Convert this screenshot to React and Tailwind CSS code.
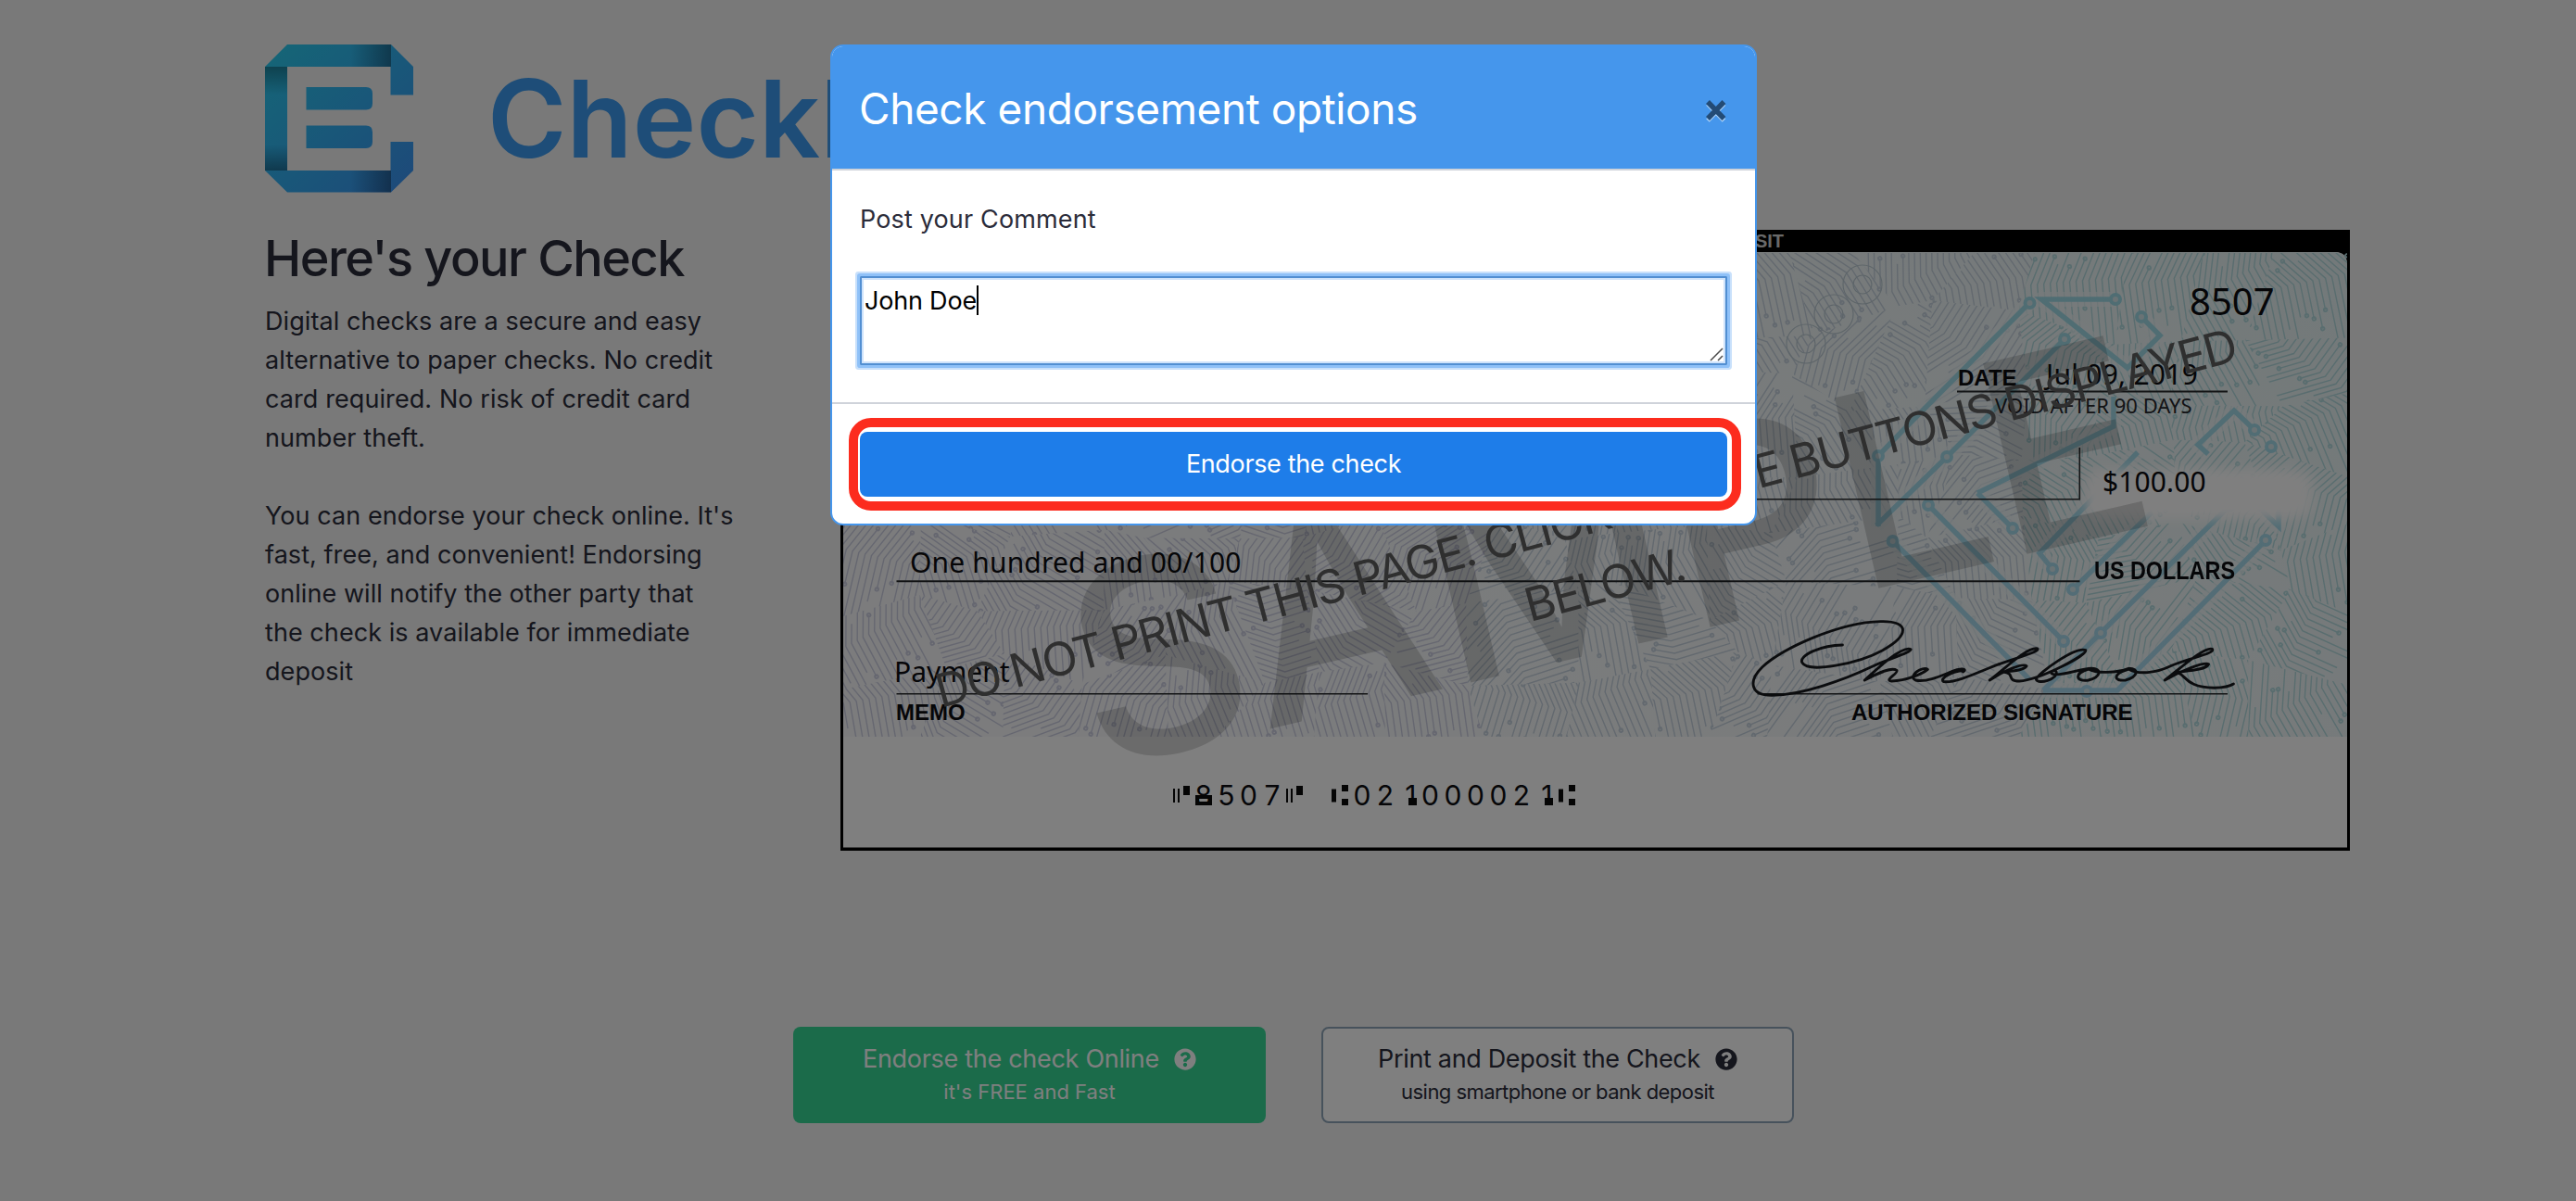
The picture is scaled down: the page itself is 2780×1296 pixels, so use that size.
import React from "react";
import { FaQuestionCircle } from "react-icons/fa";

function makeRandom(seed) {
  let s = seed;
  return () => {
    s = (s * 1664525 + 1013904223) % 4294967296;
    return s / 4294967296;
  };
}

/* Security background of the check: patches of parallel, bent circuit traces. */
function buildPatches() {
  const rnd = makeRandom(20);
  const cols = 19;
  const rows = 7;
  const cw = 1623 / cols;
  const ch = 522 / rows;
  const grid = [];
  for (let r = 0; r <= rows; r++) {
    grid.push([]);
    for (let c = 0; c <= cols; c++) {
      grid[r].push([
        c * cw + (c > 0 && c < cols ? (rnd() - 0.5) * 58 : 0),
        r * ch + (r > 0 && r < rows ? (rnd() - 0.5) * 50 : 0),
      ]);
    }
  }
  const angles = [64, 72, -62, 58, 24, -24, 80, -56, 60, 100];
  const patches = [];
  for (let r = 0; r < rows; r++) {
    for (let c = 0; c < cols; c++) {
      const quad = [grid[r][c], grid[r][c + 1], grid[r + 1][c + 1], grid[r + 1][c]];
      const cx = (c + 0.5) * cw;
      const cy = (r + 0.5) * ch;
      const angle = angles[Math.floor(rnd() * angles.length)] + rnd() * 8;
      const bend = (rnd() > 0.5 ? 1 : -1) * (18 + rnd() * 16);
      let d = "";
      const dots = [];
      for (let y = -98; y <= 98; y += 7) {
        const a = rnd() > 0.5 ? -20 - rnd() * 30 : -110;
        const b = rnd() > 0.5 ? 18 + rnd() * 30 : 110;
        const ya = y + (bend * (a + 6)) / 40;
        d += `M${a.toFixed(1)} ${ya.toFixed(1)}L-6 ${y}L${b.toFixed(1)} ${y}`;
        if (a > -110 && rnd() > 0.4) dots.push([a, ya]);
        if (b < 110 && rnd() > 0.4) dots.push([b, y]);
      }
      patches.push({ id: `p${r}x${c}`, quad: quad.map((p) => p.join(",")).join(" "), cx, cy, angle, d, dots });
    }
  }
  return patches;
}

const patches = buildPatches();

const traceColor = (x) => (x > 1250 ? "#b2dade" : x > 700 ? "#c6d2de" : "#cccee1");

const nodes = [
  [1283.5, 79], [1376, 75], [1404, 94], [1120, 244], [1321, 118], [1194, 245], [1174, 297],
  [1265, 322], [1320, 444], [1135.6, 336], [1308, 366], [1330, 388], [1360, 435], [1500, 297],
  [1345, 498], [1538, 335], [1526, 216], [1544, 234],
];

const emblem =
  "M1283 79L1146 217L1120 244V320M1376 75H1296L1389 149L1424 114L1404 94M1321 118L1194 245L1118 319M1174 297L1320 444M1136 336L1283 485M1298 497H1378L1538 335M1298 497L1360 435L1500 297M1330 388L1415 305M1227 284L1374 212V180M1227 284L1265 322M1308 366L1294 349L1400 240M1528 297L1552 320V295M1526 216L1504 195L1465 232L1476 242";

function CheckArtwork() {
  return (
    <svg className="absolute inset-0" width="1629" height="672" viewBox="0 0 1629 672" fill="none">
      <defs>
        <linearGradient id="paper" x1="0" x2="1" y1="0.3" y2="0">
          <stop offset="0" stopColor="#f8f9fb" />
          <stop offset="0.5" stopColor="#f3f7f8" />
          <stop offset="1" stopColor="#e6f3f4" />
        </linearGradient>
        <linearGradient id="emblem" gradientUnits="userSpaceOnUse" x1="1300" y1="60" x2="1300" y2="500">
          <stop offset="0" stopColor="#9fdbe6" />
          <stop offset="1" stopColor="#a9d9ee" />
        </linearGradient>
        <filter id="soft" x="-20%" y="-40%" width="140%" height="180%">
          <feGaussianBlur stdDeviation="7" />
        </filter>
        {patches.map((p) => (
          <clipPath id={p.id} key={p.id}>
            <polygon points={p.quad} />
          </clipPath>
        ))}
      </defs>
      <rect x="0" y="0" width="1629" height="670" fill="#000" />
      <path d="M3 24H1613Q1626 24 1626 38V666.500H3Z" fill="#ffffff" />
      <path d="M3 24H1613Q1626 24 1626 38V547H3Z" fill="url(#paper)" />
      <g transform="translate(3 25)" strokeWidth="1.400">
        {patches.map((p) => (
          <g key={p.id} clipPath={`url(#${p.id})`} stroke={traceColor(p.cx)}>
            <g transform={`translate(${p.cx} ${p.cy}) rotate(${p.angle})`}>
              <path d={p.d} />
              {p.dots.map((q, i) => (
                <circle key={i} cx={q[0]} cy={q[1]} r="1.800" strokeWidth="1.800" />
              ))}
            </g>
          </g>
        ))}
      </g>
      <g stroke="#bccbd3" strokeWidth="1.200">
        <circle cx="1103" cy="59" r="21" /><circle cx="1103" cy="59" r="10" />
        <circle cx="1072" cy="91" r="21" /><circle cx="1072" cy="91" r="10" />
        <circle cx="1042" cy="123" r="21" /><circle cx="1042" cy="123" r="10" />
      </g>

      <path d={emblem} stroke="#edf5f6" strokeWidth="16" strokeLinejoin="round" opacity="0.7" />
      <g stroke="url(#emblem)" strokeWidth="5.500">
        <path d={emblem} />
        {nodes.map((n, i) => (
          <circle key={i} cx={n[0]} cy={n[1]} r="5" strokeWidth="4" fill="#d5e6ea" />
        ))}
      </g>
      <rect x="1345" y="260" width="244" height="50" rx="12" fill="#ffffff" filter="url(#soft)" />
      <rect x="1350" y="264" width="220" height="42" rx="12" fill="#ffffff" filter="url(#soft)" />

      <g stroke="#26292b">
        <path d="M1205 174.500H1497" strokeWidth="2" />
        <path d="M60 290.700H1337.300V235" strokeWidth="1.600" />
        <path d="M60.500 379.300H1337.500" strokeWidth="2" />
        <path d="M60.500 500.700H569" strokeWidth="1.500" />
        <path d="M989.500 500.700H1497" strokeWidth="1.500" />
      </g>

      {/* Handwritten signature */}
      <g transform="translate(973 312) scale(0.4337 0.3333)" stroke="#17191d" strokeLinecap="round" strokeLinejoin="round" strokeWidth="2.900">
        <path vectorEffect="non-scaling-stroke" d="M250 408C200 408 138 442 150 466C165 500 290 468 350 425C415 378 420 330 345 332C240 335 100 420 50 480C15 525 20 572 75 571C150 570 255 520 320 480C370 450 420 432 420 422C400 408 340 480 305 522C340 498 372 478 385 490C390 500 352 522 372 525C410 524 450 500 462 487C450 476 410 508 432 522C460 530 500 505 522 494C545 480 562 486 550 495C545 482 485 515 502 527C535 532 600 488 640 470" />
        <path vectorEffect="non-scaling-stroke" d="M640 470C685 448 742 430 735 420C710 412 650 490 616 522C650 492 700 465 708 476C700 492 665 494 650 495C682 500 655 524 690 525C740 522 860 440 855 425C830 412 735 500 732 520C738 536 784 520 782 495C780 484 760 498 775 503C800 508 840 485 870 484C895 484 895 510 862 522C830 528 825 500 862 486C880 500 930 500 962 484C990 484 985 510 955 522C920 526 925 500 962 486C985 505 1030 500 1070 474C1120 448 1178 435 1170 421C1150 412 1085 490 1052 522C1090 492 1150 462 1161 470C1155 490 1105 492 1080 497C1105 500 1100 546 1175 547C1200 546 1215 541 1223 534" />
      </g>
    </svg>
  );
}

/* Two thin strokes and a block: the "on-us" mark of the MICR line. */
function OnUsMark() {
  return (
    <svg width="18" height="22" viewBox="0 0 18 22" fill="#0a0a0a">
      <rect x="0" y="4" width="2" height="15" />
      <rect x="5" y="4" width="2" height="15" />
      <rect x="11" y="1" width="7" height="10" />
    </svg>
  );
}

function TransitMark() {
  return (
    <svg width="18" height="22" viewBox="0 0 18 22" fill="#0a0a0a">
      <rect x="0" y="4.500" width="5" height="14" />
      <rect x="11" y="0" width="7" height="7" />
      <rect x="11" y="15" width="7" height="7" />
    </svg>
  );
}

function MicrCell({ ch }) {
  return (
    <span className="relative flex h-[22px] w-[24.5px] items-center justify-end">
      {ch === "u" && <OnUsMark />}
      {ch === "t" && <TransitMark />}
      {/[0-9]/.test(ch) && (
        <span className="font-['Inter'] text-[30px] leading-[22px]">{ch}</span>
      )}
      {ch === "8" && <span className="absolute bottom-0 right-0 h-[11px] w-[18px] border-[4px] border-[#0a0a0a]" />}
      {ch === "1" && <span className="absolute bottom-0 right-0 h-[8px] w-[9px] bg-[#0a0a0a]" />}
    </span>
  );
}

function Check() {
  return (
    <div className="relative mt-px h-[670px] w-[1629px] whitespace-nowrap text-[#0c0c10]">
      <CheckArtwork />
      <span className="absolute right-[611px] top-[2px] font-['Liberation_Sans'] text-[20px] font-bold leading-none text-[#d2d2d2]">MOBILE DEPOSIT</span>
      <span className="absolute left-[1456px] top-[57px] font-['Noto_Sans'] text-[40px] leading-none">8507</span>
      <span className="absolute left-[1206px] top-[148px] font-['Liberation_Sans'] text-[24px] font-bold leading-none">DATE</span>
      <span className="absolute left-[1301px] top-[141px] font-['Noto_Sans'] text-[30px] leading-none tracking-[0.25px]">Jul 09, 2019</span>
      <span className="absolute left-[1246px] top-[178px] font-['Noto_Sans'] text-[22px] leading-none text-[#26262a]">VOID AFTER 90 DAYS</span>
      <span className="absolute left-[1362px] top-[257px] font-['Noto_Sans'] text-[30px] leading-none tracking-[0.1px]">$100.00</span>
      <span className="absolute left-[75px] top-[344px] font-['Noto_Sans'] text-[30px] leading-none tracking-[0.15px]">One hundred and 00/100</span>
      <span className="absolute left-[58px] top-[462px] font-['Noto_Sans'] text-[30px] leading-none">Payment</span>
      <span className="absolute left-[60px] top-[509px] font-['Liberation_Sans'] text-[24px] font-bold leading-none">MEMO</span>
      <span className="absolute left-[1091px] top-[509px] font-['Liberation_Sans'] text-[24px] font-bold leading-none">AUTHORIZED SIGNATURE</span>
      <span className="absolute left-[1353px] top-[354px] origin-left scale-x-[0.835] font-['Liberation_Sans'] text-[28px] font-bold leading-none">US DOLLARS</span>
      <div className="absolute left-[352px] top-[599px] flex">
        {"u8507u t021000021t".split("").map((ch, i) => (
          <MicrCell key={i} ch={ch} />
        ))}
      </div>
      <span className="absolute left-[275px] top-[332px] origin-[0_250px] rotate-[-13deg] font-['Inter'] text-[290px] font-medium leading-none tracking-[0.5px] text-black/16">SAMPLE</span>
      <div className="absolute left-[108px] top-[461px] w-[1442px] origin-[0_54px] rotate-[-15deg] text-center font-['Inter'] text-[50px] leading-[75px] tracking-[-1.85px] text-[#5e5e5e]">
        DO NOT PRINT THIS PAGE. CLICK ON THE BUTTONS DISPLAYED
        <br />
        <span className="pl-[10px]">BELOW.</span>
      </div>
    </div>
  );
}

function Logo() {
  return (
    <svg width="160" height="160" viewBox="0 0 160 160">
      <defs>
        <linearGradient id="brand" gradientUnits="userSpaceOnUse" x1="0" y1="0" x2="160" y2="160">
          <stop offset="0" stopColor="#2acdee" />
          <stop offset="0.5" stopColor="#32b0f2" />
          <stop offset="1" stopColor="#3c92f4" />
        </linearGradient>
        <linearGradient id="foldRight" x1="0" x2="1" y1="0" y2="0">
          <stop offset="0.68" stopColor="#000" stopOpacity="0" />
          <stop offset="1" stopColor="#000" stopOpacity="0.36" />
        </linearGradient>
        <linearGradient id="foldLeft" x1="0" x2="0" y1="0" y2="1">
          <stop offset="0" stopColor="#000" stopOpacity="0.34" />
          <stop offset="0.27" stopColor="#000" stopOpacity="0" />
          <stop offset="0.75" stopColor="#000" stopOpacity="0" />
          <stop offset="1" stopColor="#000" stopOpacity="0.36" />
        </linearGradient>
      </defs>
      <g fill="url(#brand)">
        <path d="M24 0H136L160 24V54.500H135.500V24H24V136H135.500V105H160V136L136 159.500H24L0 136V24Z" />
        <path d="M44.500 46H109Q116 46 116 53V63.500Q116 70.500 109 70.500H44.500Z" />
        <path d="M44.500 87.500H109Q116 87.500 116 94.500V105Q116 112 109 112H44.500Z" />
      </g>
      <path d="M24 0H136V24H0Z" fill="url(#foldRight)" />
      <path d="M0 136H136V159.500H24Z" fill="url(#foldRight)" />
      <path d="M0 24H24V136H0Z" fill="url(#foldLeft)" />
    </svg>
  );
}

function EndorseModal() {
  return (
    <div className="w-[1000px] overflow-hidden rounded-[14px] border-2 border-[#4596ec] bg-white text-[27px] text-[#2b2c3a]">
      <div className="flex h-[134px] items-center justify-between border-b-2 border-[#cfd3da] bg-[#4596ec] pl-[29px] pr-[30px]">
        <h5 className="pt-[2px] text-[46px] leading-[60px] tracking-[-0.43px] text-white">Check endorsement options</h5>
        <svg width="24" height="27" viewBox="0 0 24 27" fill="none" className="mt-[6px]">
          <path d="M3 4.500L20.500 22.500M20.500 4.500L3 22.500" stroke="#a8cff7" strokeWidth="5" transform="translate(0 1.500)" />
          <path d="M3 4L20.500 22M20.500 4L3 22" stroke="#234b76" strokeWidth="5.500" />
        </svg>
      </div>
      <div className="px-[30px] pb-[40px] pt-[32px]">
        <label className="block leading-[42px] tracking-[0.15px]">Post your Comment</label>
        <div className="relative mt-[40px] flex h-[96px] rounded-[1px] border-2 border-[#528fd2] pl-[3px] pt-[8px] text-black shadow-[0_0_0_3px_#8fc1f8,0_0_0_5px_#c8e0fb,inset_0_0_0_2px_#cfe3fb]">
          <span className="leading-[33px] tracking-[-0.2px]">John Doe</span>
          <span className="h-[32px] w-[2px] bg-black" />
          <svg className="absolute bottom-[2px] right-[2px]" width="15" height="15" viewBox="0 0 15 15" stroke="#4a4a4a" strokeWidth="1.500">
            <path d="M1 14L14 1M9 14L14 9" />
          </svg>
        </div>
      </div>
      <div className="border-t-2 border-[#cfd3da] px-[30px] pb-[29px] pt-[30px]">
        <div className="relative flex h-[70px] items-center justify-center rounded-[8px] bg-[#1e7de9] pb-[2px] tracking-[-0.35px] text-white">
          <span className="leading-none">Endorse the check</span>
          <span className="absolute -bottom-[15px] -left-[12px] -right-[15px] -top-[15px] rounded-[24px] border-[10px] border-[#fc2c1e]" />
        </div>
      </div>
    </div>
  );
}

export default function App() {
  return (
    <div className="relative h-[1296px] w-[2780px] overflow-hidden bg-[#f2f2f2] font-['Inter',sans-serif] text-[#2b2c3a]">
      <div className="pl-[286px] pt-[48px]">
        <header className="flex h-[160px] items-start">
          <Logo />
          <span className="ml-[80px] mt-[22px] text-[116px] font-semibold leading-none tracking-[0.1px] text-[#3c9bf0]">Checkbook</span>
        </header>
        <main className="mt-[39px] flex">
          <div className="w-[621px] shrink-0">
            <h2 className="-ml-px text-[54px] font-medium leading-[64px] tracking-[-1.5px]">Here's your Check</h2>
            <p className="mt-[15px] w-[508px] text-[27px] leading-[42px] tracking-[0.09px]">
              Digital checks are a secure and easy alternative to paper checks. No credit card required. No risk of credit card number theft.
            </p>
            <p className="mt-[42px] w-[508px] text-[27px] leading-[42px] tracking-[0.06px]">
              You can endorse your check online. It's fast, free, and convenient! Endorsing online will notify the other party that the check is available for immediate deposit
            </p>
          </div>
          <Check />
        </main>
        <div className="ml-[570px] mt-[190px] flex gap-[60px] text-center">
          <div className="h-[104px] w-[510px] rounded-[8px] bg-[#36d694] pt-[17px] text-white">
            <div className="flex items-center justify-center gap-[16px] text-[27px] leading-[36px] tracking-[-0.3px]">
              Endorse the check Online
              <FaQuestionCircle className="size-[24px]" />
            </div>
            <div className="mt-[2px] text-[22px] leading-[30px]">it's FREE and Fast</div>
          </div>
          <div className="h-[104px] w-[510px] rounded-[8px] border-2 border-[#8ea4b8] bg-white pt-[15px]">
            <div className="flex items-center justify-center gap-[16px] text-[27px] leading-[36px] tracking-[-0.34px]">
              Print and Deposit the Check
              <FaQuestionCircle className="size-[24px]" />
            </div>
            <div className="mt-[2px] text-[22px] leading-[30px] tracking-[-0.55px]">using smartphone or bank deposit</div>
          </div>
        </div>
      </div>
      <div className="absolute inset-0 flex items-start justify-center bg-black/50 pl-[12px] pt-[48px]">
        <EndorseModal />
      </div>
    </div>
  );
}
